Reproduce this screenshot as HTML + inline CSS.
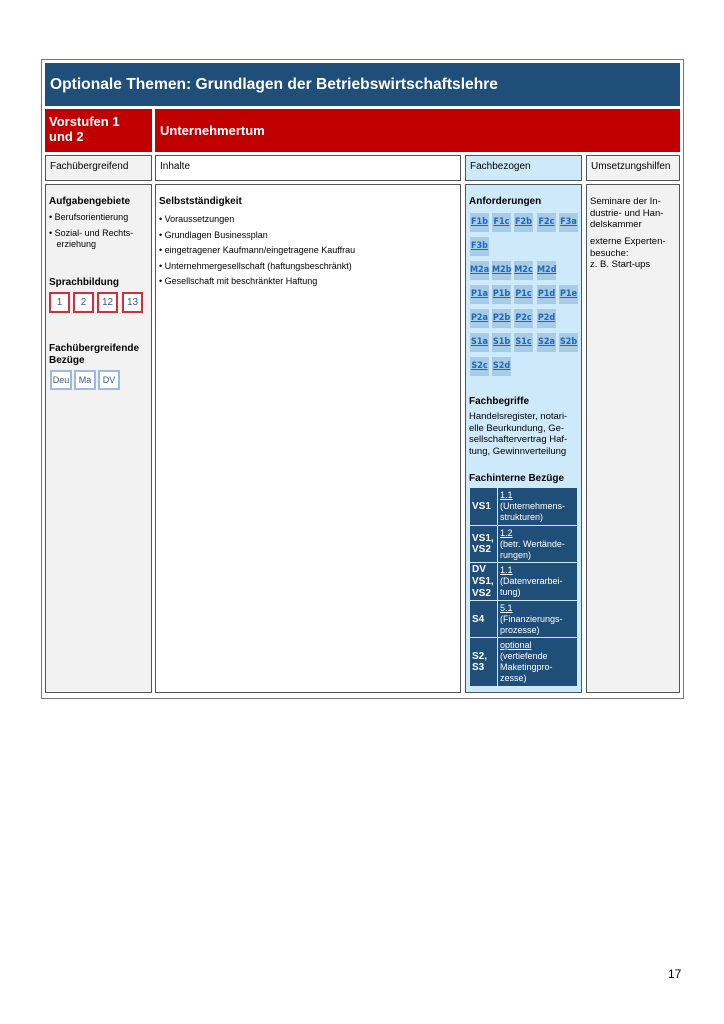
<!DOCTYPE html>
<html><head><meta charset="utf-8"><style>
*{margin:0;padding:0;box-sizing:border-box}
body{width:724px;height:1024px;background:#fff;position:relative;font-family:"Liberation Sans",Arial,sans-serif;color:#000;overflow:hidden}
.a{position:absolute}
.cell{position:absolute;border:1px solid #555}
.b{font-weight:bold}
.s{font-size:10px;line-height:12px}
.bd{position:absolute;width:19px;height:19px;background:#a9cbe6;color:#1d67b8;font-size:9px;font-weight:bold;text-decoration:underline;text-align:center;line-height:19px;font-family:"DejaVu Sans Condensed","Liberation Sans",sans-serif}
.sb{position:absolute;width:21px;height:21px;border:2px solid #c8343a;background:#fff;color:#3a5a8a;font-size:10px;text-align:center;line-height:17px}
.fb{position:absolute;width:22px;height:20px;border:2px solid #9db8df;background:#fff;color:#3a5a8a;font-size:9px;text-align:center;line-height:16px}
</style></head><body>
<div class="a" style="left:41px;top:59px;width:643px;height:640px;border:1px solid #777"></div>
<div class="a" style="left:45px;top:63px;width:635px;height:43px;background:#1f4e79;color:#fff;font-weight:bold;font-size:15.6px;line-height:43px;padding-left:5px">Optionale Themen: Grundlagen der Betriebswirtschaftslehre</div>
<div class="a" style="left:45px;top:109px;width:107px;height:43px;background:#c00000;color:#fff;font-weight:bold;font-size:13px;line-height:15px;padding:5px 0 0 4px">Vorstufen 1<br>und 2</div>
<div class="a" style="left:155px;top:109px;width:525px;height:43px;background:#c00000;color:#fff;font-weight:bold;font-size:13px;line-height:43px;padding-left:5px">Unternehmertum</div>

<div class="cell s" style="left:45px;top:155px;width:107px;height:26px;background:#f2f2f2;padding:5px 4px">Fachübergreifend</div>
<div class="cell s" style="left:155px;top:155px;width:306px;height:26px;background:#fff;padding:5px 4px">Inhalte</div>
<div class="cell s" style="left:465px;top:155px;width:117px;height:26px;background:#cde9fa;padding:5px 4px">Fachbezogen</div>
<div class="cell s" style="left:586px;top:155px;width:94px;height:26px;background:#f2f2f2;padding:5px 4px">Umsetzungshilfen</div>

<div class="cell" style="left:45px;top:184px;width:107px;height:509px;background:#f2f2f2"></div>
<div class="cell" style="left:155px;top:184px;width:306px;height:509px;background:#fff"></div>
<div class="cell" style="left:465px;top:184px;width:117px;height:509px;background:#cde9fa"></div>
<div class="cell" style="left:586px;top:184px;width:94px;height:509px;background:#f2f2f2"></div>

<div class="a s b" style="left:49px;top:196px">Aufgabengebiete</div>
<div class="a" style="left:49px;top:212px;font-size:9px;line-height:11px">• Berufsorientierung</div>
<div class="a" style="left:49px;top:228px;font-size:9px;line-height:11px">• Sozial- und Rechts-<br>&nbsp;&nbsp;&nbsp;erziehung</div>
<div class="a s b" style="left:49px;top:277px">Sprachbildung</div>
<div class="sb" style="left:49px;top:292px">1</div>
<div class="sb" style="left:73px;top:292px">2</div>
<div class="sb" style="left:97px;top:292px">12</div>
<div class="sb" style="left:122px;top:292px">13</div>
<div class="a s b" style="left:49px;top:343px">Fachübergreifende<br>Bezüge</div>
<div class="fb" style="left:50px;top:370px">Deu</div>
<div class="fb" style="left:74px;top:370px">Ma</div>
<div class="fb" style="left:98px;top:370px">DV</div>

<div class="a s b" style="left:159px;top:196px">Selbstständigkeit</div>
<div class="a" style="left:159px;top:212px;font-size:9px;line-height:15.6px">• Voraussetzungen<br>• Grundlagen Businessplan<br>• eingetragener Kaufmann/eingetragene Kauffrau<br>• Unternehmergesellschaft (haftungsbeschränkt)<br>• Gesellschaft mit beschränkter Haftung</div>

<div class="a s b" style="left:469px;top:196px">Anforderungen</div>
<div class="bd" style="left:470px;top:213px">F1b</div><div class="bd" style="left:492px;top:213px">F1c</div><div class="bd" style="left:514px;top:213px">F2b</div><div class="bd" style="left:537px;top:213px">F2c</div><div class="bd" style="left:559px;top:213px">F3a</div>
<div class="bd" style="left:470px;top:237px">F3b</div>
<div class="bd" style="left:470px;top:261px">M2a</div><div class="bd" style="left:492px;top:261px">M2b</div><div class="bd" style="left:514px;top:261px">M2c</div><div class="bd" style="left:537px;top:261px">M2d</div>
<div class="bd" style="left:470px;top:285px">P1a</div><div class="bd" style="left:492px;top:285px">P1b</div><div class="bd" style="left:514px;top:285px">P1c</div><div class="bd" style="left:537px;top:285px">P1d</div><div class="bd" style="left:559px;top:285px">P1e</div>
<div class="bd" style="left:470px;top:309px">P2a</div><div class="bd" style="left:492px;top:309px">P2b</div><div class="bd" style="left:514px;top:309px">P2c</div><div class="bd" style="left:537px;top:309px">P2d</div>
<div class="bd" style="left:470px;top:333px">S1a</div><div class="bd" style="left:492px;top:333px">S1b</div><div class="bd" style="left:514px;top:333px">S1c</div><div class="bd" style="left:537px;top:333px">S2a</div><div class="bd" style="left:559px;top:333px">S2b</div>
<div class="bd" style="left:470px;top:357px">S2c</div><div class="bd" style="left:492px;top:357px">S2d</div>
<div class="a s b" style="left:469px;top:396px">Fachbegriffe</div>
<div class="a" style="left:469px;top:411px;font-size:9.5px;line-height:11.5px">Handelsregister, notari-<br>elle Beurkundung, Ge-<br>sellschaftervertrag Haf-<br>tung, Gewinnverteilung</div>
<div class="a s b" style="left:469px;top:473px">Fachinterne Bezüge</div>

<table class="a" style="left:469px;top:487px;width:109px;border-collapse:collapse;color:#fff;font-size:9px;line-height:11px">
<tr style="height:38px"><td style="background:#1f4e79;border:1px solid #cde9fa;width:28px;font-weight:bold;font-size:10px;padding-left:2px">VS1</td><td style="background:#1f4e79;border:1px solid #cde9fa;padding-left:2px"><u>1.1</u><br>(Unternehmens-<br>strukturen)</td></tr>
<tr style="height:37px"><td style="background:#1f4e79;border:1px solid #cde9fa;font-weight:bold;font-size:10px;padding-left:2px">VS1,<br>VS2</td><td style="background:#1f4e79;border:1px solid #cde9fa;padding-left:2px"><u>1.2</u><br>(betr. Wertände-<br>rungen)</td></tr>
<tr style="height:38px"><td style="background:#1f4e79;border:1px solid #cde9fa;font-weight:bold;font-size:10px;line-height:12px;padding-left:2px">DV<br>VS1,<br>VS2</td><td style="background:#1f4e79;border:1px solid #cde9fa;padding-left:2px"><u>1.1</u><br>(Datenverarbei-<br>tung)</td></tr>
<tr style="height:37px"><td style="background:#1f4e79;border:1px solid #cde9fa;font-weight:bold;font-size:10px;padding-left:2px">S4</td><td style="background:#1f4e79;border:1px solid #cde9fa;padding-left:2px"><u>5.1</u><br>(Finanzierungs-<br>prozesse)</td></tr>
<tr style="height:49px"><td style="background:#1f4e79;border:1px solid #cde9fa;font-weight:bold;font-size:10px;padding-left:2px">S2,<br>S3</td><td style="background:#1f4e79;border:1px solid #cde9fa;padding-left:2px"><u>optional</u><br>(vertiefende<br>Maketingpro-<br>zesse)</td></tr>
</table>

<div class="a" style="left:590px;top:196px;font-size:9.5px;line-height:11.5px">Seminare der In-<br>dustrie- und Han-<br>delskammer</div>
<div class="a" style="left:590px;top:236px;font-size:9.5px;line-height:11.5px">externe Experten-<br>besuche:<br>z. B. Start-ups</div>

<div class="a" style="left:668px;top:967px;font-size:12px">17</div>
</body></html>
